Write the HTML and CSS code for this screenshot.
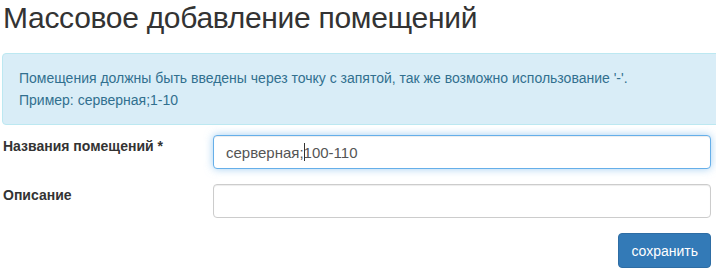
FILE: index.html
```html
<!DOCTYPE html>
<html lang="ru">
<head>
<meta charset="UTF-8" />
<meta name="viewport" content="width=device-width, initial-scale=1.0"/>
<title>Массовое добавление помещений</title>
<link rel="stylesheet" href="styles.css">
</head>
<body>

<div class="page">
  <h1 class="title">Массовое добавление помещений</h1>

  <div class="alert">
    Помещения должны быть введены через точку с запятой, так же возможно использование '-'.<br>
    Пример: серверная;1-10
  </div>

  <form class="form">
    <div class="form-row">
      <label class="form-label" for="rooms">Названия помещений *</label>
      <div class="field">
        <input type="text" id="rooms" class="form-control is-focus" value="серверная;100-110" />
        <span class="caret"></span>
      </div>
    </div>
    <div class="form-row">
      <label class="form-label" for="desc">Описание</label>
      <div class="field">
        <input type="text" id="desc" class="form-control" />
      </div>
    </div>
    <div class="form-actions">
      <button type="button" class="btn-primary">сохранить</button>
    </div>
  </form>
</div>

</body>
</html>
```

FILE: styles.css
```css
html, body {
  margin: 0;
  overflow: hidden;
}
body {
  font-family: "Liberation Sans", Arial, sans-serif;
  font-size: 14px;
  color: #333;
  background-color: #fff;
}
.page {
  width: 730px;
  padding-left: 2px;
}
.title {
  margin: 0 0 18px 1px;
  font-size: 30px;
  font-weight: 400;
  letter-spacing: -0.3px;
  line-height: 35px;
  color: #333;
}
.alert {
  padding: 13px 16px;
  line-height: 22px;
  color: #31708f;
  background-color: #d9edf7;
  border: 1px solid #bce8f1;
  border-radius: 4px;
}
.form {
  margin-top: 10px;
}
.form-row {
  display: flex;
  margin-bottom: 15px;
}
.form-label {
  width: 211px;
  padding: 1px 0 0 1px;
  font-weight: 700;
  font-size: 14px;
  line-height: 20px;
  box-sizing: border-box;
}
.field {
  position: relative;
  width: 498px;
}
.form-control {
  display: block;
  width: 100%;
  height: 34px;
  padding: 6px 12px;
  font-family: inherit;
  font-size: 15px;
  color: #555;
  background-color: #fff;
  border: 1px solid #ccc;
  border-radius: 4px;
  box-shadow: inset 0 1px 1px rgba(0,0,0,0.075);
  box-sizing: border-box;
  outline: none;
}
.form-control.is-focus {
  border-color: #66afe9;
  box-shadow: inset 0 1px 1px rgba(0,0,0,0.075), 0 0 8px rgba(102,175,233,0.6);
}
.caret {
  position: absolute;
  left: 91px;
  top: 8px;
  width: 1px;
  height: 18px;
  background-color: #333;
}
.form-actions {
  display: flex;
  justify-content: flex-end;
  width: 709px;
}
.btn-primary {
  height: 35px;
  padding: 6px 12px;
  font-family: inherit;
  font-size: 14px;
  color: #fff;
  background-color: #337ab7;
  border: 1px solid #2e6da4;
  border-radius: 4px;
  cursor: pointer;
}
```
